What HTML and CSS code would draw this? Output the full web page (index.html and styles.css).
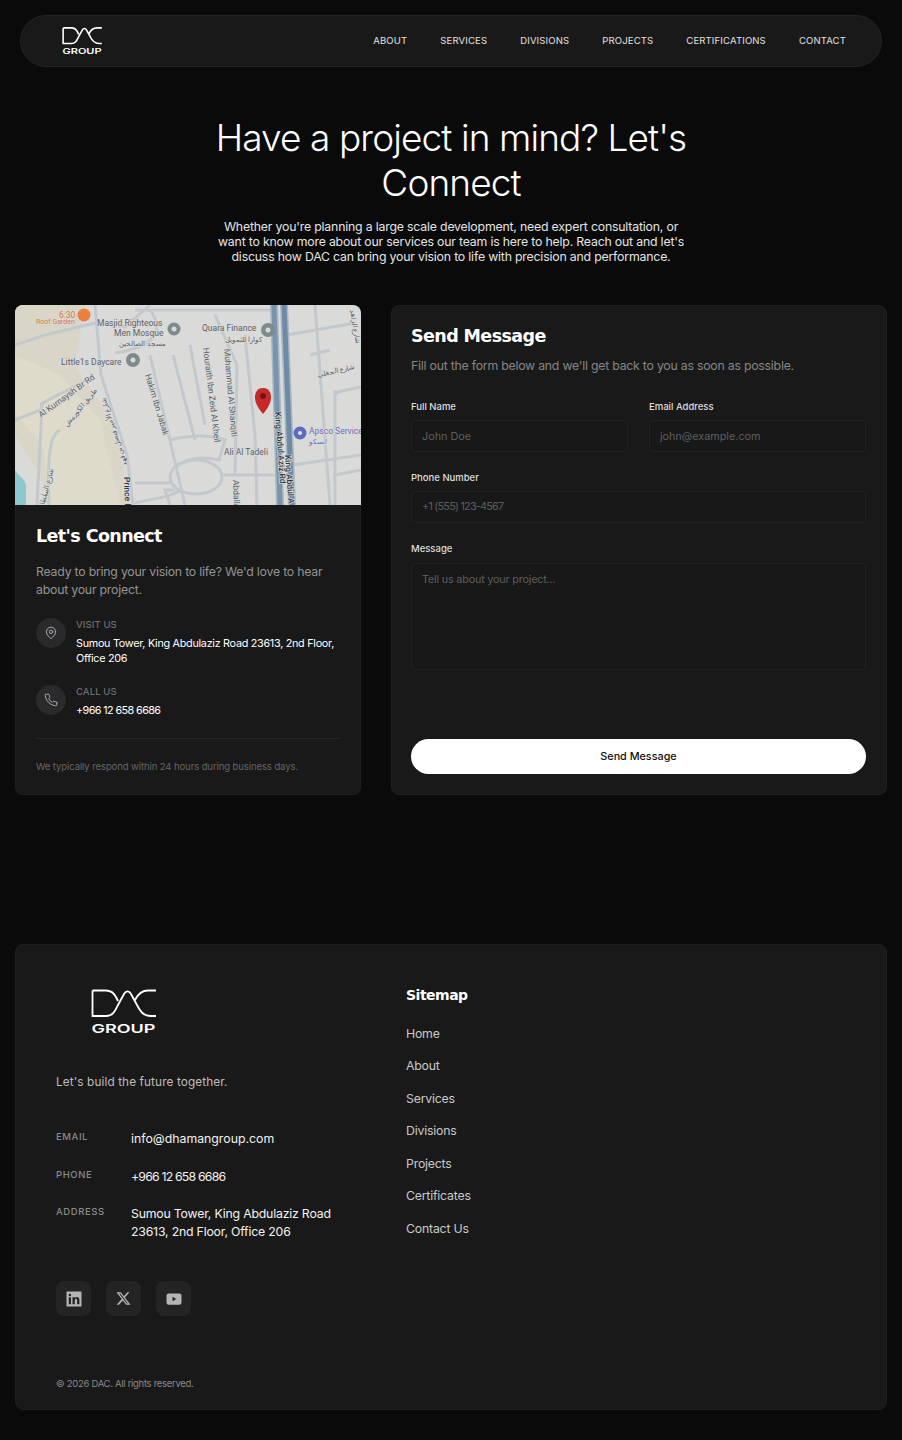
FILE: index.html
```html
<!DOCTYPE html>
<html lang="en">
<head>
<meta charset="utf-8">
<title>DAC Group - Contact</title>
<link rel="stylesheet" href="styles.css">
</head>
<body>
<header class="nav">
  <a class="nav-logo" href="#">
    <svg class="logo-svg" width="40" height="28" viewBox="0 0 65 46" fill="none"><path d="M1.500 1.500V27H15C22 27 24 22 27 16L33 5C35 1.500 38 1.500 40 5L46 16C49 22 52 27 60 27H65M1.500 1.500H15C20 1.500 23 4 25 8L27 12M65 1.500H57C52 1.500 47 5 44 11" stroke="#fff" stroke-width="2.600"/><text class="logo-text" x="32.500" y="44" text-anchor="middle" textLength="64" lengthAdjust="spacingAndGlyphs">GROUP</text></svg>
  </a>
  <nav class="nav-links">
    <a href="#">ABOUT</a><a href="#">SERVICES</a><a href="#">DIVISIONS</a><a href="#">PROJECTS</a><a href="#">CERTIFICATIONS</a><a href="#">CONTACT</a>
  </nav>
</header>

<section class="hero">
  <h1>Have a project in mind? Let's<br>Connect</h1>
  <p>Whether you're planning a large scale development, need expert consultation, or<br>want to know more about our services our team is here to help. Reach out and let's<br>discuss how DAC can bring your vision to life with precision and performance.</p>
</section>

<main class="contact">
  <aside class="card info">
    <svg class="map" width="346" height="200" viewBox="0 0 346 200">
      <rect width="346" height="200" fill="#dadbd9"/>
      <path d="M0 0H70L60 60L100 120L115 200H32L25 170L0 130Z" fill="#d9d6c8"/>
      <path d="M0 50L45 70L85 115L105 200H35L28 140L0 110Z" fill="#dfdbca"/>
      <path d="M0 165C4 172 9 172 11 180L11 200H0Z" fill="#8fc7d0"/>
      <g fill="none" stroke="#c3c8cc" stroke-width="3">
        <path d="M80 0L86 70L112 150L118 200"/>
        <path d="M0 40L30 30L80 18L110 22L135 0"/>
        <path d="M135 5C150 25 140 42 100 48"/>
        <path d="M120 5H258"/>
        <path d="M135 50L170 200"/>
        <path d="M158 50L180 135"/>
        <path d="M175 40L190 120"/>
        <path d="M200 10L222 60L220 170"/>
        <path d="M230 30L240 130L242 200"/>
        <path d="M155 135C175 130 195 130 210 135L204 155C185 150 170 155 160 162"/>
        <ellipse cx="181" cy="172" rx="26" ry="17"/>
        <path d="M207 170H262"/>
        <path d="M120 178H155"/>
        <path d="M120 198C135 194 150 194 165 186"/>
        <path d="M25 100C40 90 55 85 70 76"/>
        <path d="M27 100L22 200"/>
        <path d="M45 125C35 130 32 150 34 200"/>
        <path d="M0 115L25 105"/>
        <path d="M160 185H150L155 200"/>
        <path d="M278 160L346 150"/>
        <path d="M300 0L315 200"/>
        <path d="M320 85V200"/>
        <path d="M320 90C322 85 335 85 346 82"/>
        <path d="M272 30L340 18"/>
        <path d="M320 170L346 165"/>
        <path d="M295 50L315 45"/>
      </g>
      <path d="M259 0L265 200" stroke="#a9b7c4" stroke-width="8"/>
      <path d="M259 0L265 200" stroke="#7a94ad" stroke-width="5"/>
      <path d="M269 0L277 200" stroke="#a9b7c4" stroke-width="8"/>
      <path d="M269 0L277 200" stroke="#6f8aa7" stroke-width="5"/>
      <path d="M248 80C240 80 240 88 240 90C240 97 248 106 248 106C248 106 256 97 256 90C256 88 256 80 248 80Z" transform="translate(0 3)" fill="#c52a28"/>
      <circle cx="248" cy="91" r="3" fill="#7a1413"/>
      <circle cx="69" cy="10" r="6.500" fill="#e8823b"/>
      <circle cx="159" cy="24" r="6.500" fill="#7d8a8e"/><circle cx="159" cy="24" r="2.500" fill="#d9dad8"/>
      <circle cx="253" cy="25" r="7" fill="#7d8a8e"/><circle cx="253" cy="25" r="2.500" fill="#d9dad8"/>
      <circle cx="118" cy="55" r="7" fill="#7d8a8e"/><circle cx="118" cy="55" r="2.500" fill="#d9dad8"/>
      <circle cx="285" cy="128" r="6.500" fill="#5c6bc0"/><circle cx="285" cy="128" r="2" fill="#e4e6f4"/>
      <g class="map-label">
        <text class="lbl-orange" x="44" y="13">6:30</text>
        <text class="lbl-orange small" x="21" y="19">Roof Garden</text>
        <text x="82" y="21">Masjid Righteous</text>
        <text x="99" y="31">Men Mosque</text>
        <text class="small" x="104" y="41">مسجد الصالحين</text>
        <text x="187" y="26">Quara Finance</text>
        <text class="small" x="210" y="37">كوارا للتمويل</text>
        <text x="46" y="60">Little1s Daycare</text>
        <text class="lbl-blue" x="294" y="129">Apsco Service</text>
        <text class="lbl-blue small" x="294" y="139">ابسكو</text>
        <text x="209" y="150">Ali Al Tadeli</text>
        <text transform="translate(26 113) rotate(-36)">Al Kurnaysh Br Rd</text>
        <text class="small" transform="translate(52 122) rotate(-50)">طريق الكورنيش</text>
        <text transform="translate(130 70) rotate(73)">Hakim Ibn Jabak</text>
        <text transform="translate(188 43) rotate(83)">Houraith Ibn Zeid Al Kheil</text>
        <text transform="translate(209 44) rotate(85)">Muhammad Al Shanqiti</text>
        <text class="road" transform="translate(260 107) rotate(86)">King Abdul Aziz Rd</text>
        <text class="road" transform="translate(270 150) rotate(86)">King Abdul A</text>
        <text class="road" transform="translate(109 172) rotate(88)">Prince F</text>
        <text transform="translate(218 175) rotate(88)">Abdalla</text>
        <text class="small" transform="translate(112 160) rotate(-108)">شارع الأمير فيصل بن فهد</text>
        <text class="small" transform="translate(28 205) rotate(-75)">شارع السلطان</text>
        <text class="small" transform="translate(303 72) rotate(-12)">شارع الحفلي</text>
        <text class="small" transform="translate(335 5) rotate(80)">شارع الزاهد</text>
      </g>
    </svg>
    <div class="info-body">
      <h2>Let's Connect</h2>
      <p class="info-lead">Ready to bring your vision to life? We'd love to hear about your project.</p>
      <div class="info-item">
        <span class="round-icon"><svg width="14" height="14" viewBox="0 0 24 24" fill="none" stroke="#aaa" stroke-width="1.700" stroke-linecap="round" stroke-linejoin="round"><path d="M20 10c0 5-5.500 9.700-7.400 11.200a1 1 0 0 1-1.200 0C9.500 19.700 4 15 4 10a8 8 0 0 1 16 0"/><circle cx="12" cy="10" r="3"/></svg></span>
        <div class="item-text"><span class="item-label">VISIT US</span><span class="item-value">Sumou Tower, King Abdulaziz Road 23613, 2nd Floor, Office 206</span></div>
      </div>
      <div class="info-item">
        <span class="round-icon"><svg width="14" height="14" viewBox="0 0 24 24" fill="none" stroke="#aaa" stroke-width="1.700" stroke-linecap="round" stroke-linejoin="round"><path d="M22 16.900v3a2 2 0 0 1-2.200 2 19.800 19.800 0 0 1-8.600-3.100 19.500 19.500 0 0 1-6-6A19.800 19.800 0 0 1 2.100 4.200 2 2 0 0 1 4.100 2h3a2 2 0 0 1 2 1.700c.1 1 .4 1.900.7 2.800a2 2 0 0 1-.5 2.100L8.100 9.900a16 16 0 0 0 6 6l1.300-1.300a2 2 0 0 1 2.100-.4c.9.300 1.800.6 2.800.7a2 2 0 0 1 1.700 2z"/></svg></span>
        <div class="item-text"><span class="item-label">CALL US</span><span class="item-value item-phone">+966 12 658 6686</span></div>
      </div>
      <p class="info-note">We typically respond within 24 hours during business days.</p>
    </div>
  </aside>

  <form class="card form">
    <h2>Send Message</h2>
    <p class="form-lead">Fill out the form below and we'll get back to you as soon as possible.</p>
    <div class="form-row">
      <label class="field"><span>Full Name</span><input type="text" placeholder="John Doe"></label>
      <label class="field"><span>Email Address</span><input type="email" placeholder="john@example.com"></label>
    </div>
    <label class="field"><span>Phone Number</span><input class="input-phone" type="tel" placeholder="+1 (555) 123-4567"></label>
    <label class="field field-message"><span>Message</span><textarea placeholder="Tell us about your project..."></textarea></label>
    <button type="button" class="send">Send Message</button>
  </form>
</main>

<footer class="card footer">
  <div class="foot-left">
    <svg class="foot-logo" width="65" height="46" viewBox="0 0 65 46" fill="none"><path d="M1.500 1.500V27H15C22 27 24 22 27 16L33 5C35 1.500 38 1.500 40 5L46 16C49 22 52 27 60 27H65M1.500 1.500H15C20 1.500 23 4 25 8L27 12M65 1.500H57C52 1.500 47 5 44 11" stroke="#fff" stroke-width="1.800"/><text class="logo-text" x="32.500" y="44" text-anchor="middle" textLength="64" lengthAdjust="spacingAndGlyphs">GROUP</text></svg>
    <p class="tagline">Let's build the future together.</p>
    <dl class="contact-list">
      <div class="contact-row"><dt>EMAIL</dt><dd class="foot-email">info@dhamangroup.com</dd></div>
      <div class="contact-row"><dt>PHONE</dt><dd class="foot-phone">+966 12 658 6686</dd></div>
      <div class="contact-row"><dt>ADDRESS</dt><dd>Sumou Tower, King Abdulaziz Road 23613, 2nd Floor, Office 206</dd></div>
    </dl>
    <div class="socials">
      <a href="#" class="social"><svg width="18" height="18" viewBox="0 0 24 24" fill="#b5b5b5"><path d="M2 2H22V22H2ZM5 9.500V19H8V9.500ZM6.500 5A1.700 1.700 0 1 0 6.500 8.400 1.700 1.700 0 0 0 6.500 5ZM10 9.500V19H13V14C13 11 16.200 11 16.200 14V19H19.200V13.500C19.200 8.500 14.400 8.500 13 10.800V9.500Z" fill-rule="evenodd"/></svg></a>
      <a href="#" class="social"><svg width="15" height="15" viewBox="0 0 24 24" fill="#b5b5b5"><path d="M18.200 2h3.400l-7.400 8.500L23 22h-6.800l-5.400-7-6.100 7H1.200l7.900-9.100L.8 2h7l4.800 6.400zm-1.200 18h1.900L7 3.900H5z"/></svg></a>
      <a href="#" class="social"><svg width="18" height="18" viewBox="0 0 24 24" fill="#b5b5b5"><path fill-rule="evenodd" d="M5 4.500H19A3 3 0 0 1 22 7.500V16.500A3 3 0 0 1 19 19.500H5A3 3 0 0 1 2 16.500V7.500A3 3 0 0 1 5 4.500ZM10 9V15L15 12Z"/></svg></a>
    </div>
    <p class="copyright">© 2026 DAC. All rights reserved.</p>
  </div>
  <nav class="sitemap">
    <h3>Sitemap</h3>
    <a href="#">Home</a><a href="#">About</a><a href="#">Services</a><a href="#">Divisions</a><a href="#">Projects</a><a href="#">Certificates</a><a href="#">Contact Us</a>
  </nav>
</footer>
</body>
</html>
```
FILE: styles.css
```css
* { box-sizing: border-box; }
html, body { margin: 0; padding: 0; }
body {
  background: #0a0a0a;
  color: #fff;
  font-family: "Inter", "Noto Sans", sans-serif;
  width: 902px;
  height: 1440px;
  overflow: hidden;
}
a { color: inherit; text-decoration: none; }
p, h1, h2, h3, dl, dd { margin: 0; }

.nav {
  margin: 15px 20px 0;
  height: 52px;
  border-radius: 26px;
  background: #191919;
  border: 1px solid #232323;
  display: flex;
  align-items: center;
  justify-content: space-between;
  padding: 0 35px 0 41px;
}
.nav-logo { display: flex; }
.logo-text { font-family: "Inter", sans-serif; font-weight: 600; font-size: 12px; fill: #fff; }
.nav-links { display: flex; gap: 33px; padding-bottom: 2px; font-size: 9.500px; letter-spacing: .16px; color: #e2e2e2; font-weight: 400; }

.hero { text-align: center; margin-top: 48px; }
.hero h1 {
  font-family: "Inter", sans-serif;
  font-weight: 300;
  font-size: 37px;
  line-height: 45px;
  letter-spacing: -.9px;
  color: #fff;
}
.hero p { margin-top: 14px; font-size: 12.300px; line-height: 15px; letter-spacing: -.19px; color: #e4e4e4; white-space: nowrap; }

.contact { display: flex; gap: 30px; margin: 41px 15px 0; height: 490px; }
.card { background: #191919; border-radius: 8px; border: 1px solid #1f1f1f; }
.info { width: 346px; flex: none; overflow: hidden; display: flex; flex-direction: column; border: 0; box-shadow: inset 0 0 0 1px #1f1f1f; }
.map { display: block; flex: none; }
.map-label text { font-family: "Roboto", "Noto Sans", sans-serif; font-size: 8.500px; fill: #5a6269; stroke: #dadbd9; stroke-width: 1.500px; paint-order: stroke; }
.map-label .small { font-size: 7px; }
.map-label .lbl-orange { fill: #d9792e; }
.map-label .lbl-blue { fill: #6a70bf; }
.map-label .road { fill: #2e3a46; font-weight: 500; }

.info-body { padding: 20px 21px 0; flex: 1; display: flex; flex-direction: column; }
h2 {
  font-family: "DejaVu Sans", sans-serif;
  font-weight: 700;
  font-size: 17.500px;
  letter-spacing: -.6px;
  line-height: 22px;
}
.info-lead { margin-top: 16px; font-size: 12.300px; line-height: 18px; letter-spacing: -.22px; color: #949494; }
.info-item { display: flex; gap: 10px; margin-top: 19px; }
.round-icon { width: 30px; height: 30px; flex: none; border-radius: 50%; background: #2a2a2c; display: flex; align-items: center; justify-content: center; }
.item-text { display: flex; flex-direction: column; flex: 1; }
.item-label { font-size: 9.500px; line-height: 14px; letter-spacing: .1px; color: #6e6e6e; font-weight: 500; }
.item-value { margin-top: 4px; font-size: 10.800px; line-height: 15px; letter-spacing: -.28px; color: #fff; font-weight: 400; }
.item-phone { letter-spacing: -.6px; }
.info-note { margin-top: 20px; padding-top: 21px; border-top: 1px solid #262626; font-size: 9.500px; line-height: 14px; letter-spacing: -.09px; color: #666; }

.form { flex: 1; padding: 19px 20px 20px 19px; display: flex; flex-direction: column; }
.form-lead { margin-top: 10px; font-size: 12.300px; line-height: 18px; letter-spacing: -.23px; color: #868686; }
.form-row { display: flex; gap: 21px; margin-top: 25px; }
.form-row .field { flex: 1; margin-top: 0; }
.field { display: flex; flex-direction: column; margin-top: 18.500px; }
.field span { font-size: 9.500px; line-height: 14px; color: #dedede; font-weight: 500; margin-bottom: 6px; }
.field-message { margin-top: 19px; }
.field-message span { margin-bottom: 7px; }
.field input, .field textarea {
  background: #181818;
  border: 1px solid #222;
  border-radius: 4px;
  color: #fff;
  font: inherit;
  font-size: 10.800px;
  padding: 0 10px;
  height: 32px;
  outline: none;
  width: 100%;
  display: block;
}
.field textarea { height: 107px; padding: 9px 10px; resize: none; letter-spacing: -.18px; }
.field .input-phone { letter-spacing: -.75px; }
.field input::placeholder, .field textarea::placeholder { color: #5e5e5e; opacity: 1; }
.send {
  margin-top: auto;
  height: 35px;
  border: 0;
  border-radius: 18px;
  background: #fff;
  color: #111;
  font: inherit;
  font-size: 10.800px;
  font-weight: 500;
  flex: none;
}

.footer { margin: 149px 15px 0; height: 466px; display: flex; padding: 0 0 0 40px; }
.foot-left { width: 350px; flex: none; display: flex; flex-direction: column; }
.foot-logo { display: block; margin: 44px 0 0 35px; }
.tagline { margin-top: 38px; font-size: 11.800px; line-height: 18px; letter-spacing: .1px; color: #bdbdbd; }
.contact-list { margin-top: 39px; display: flex; flex-direction: column; gap: 19.500px; }
.contact-row { display: flex; }
.contact-row dt { width: 75px; flex: none; font-size: 9.500px; line-height: 14px; letter-spacing: .6px; color: #8a8a8a; font-weight: 500; }
.contact-row dd { font-size: 12.300px; line-height: 18px; letter-spacing: -.2px; color: #f2f2f2; width: 215px; }
.contact-row .foot-email { letter-spacing: 0; }
.contact-row .foot-phone { letter-spacing: -.8px; }
.socials { display: flex; gap: 15px; margin-top: 40px; }
.social { width: 35px; height: 35px; border-radius: 8px; background: #242424; display: flex; align-items: center; justify-content: center; }
.copyright { margin-top: 61px; font-size: 9.500px; line-height: 14px; letter-spacing: -.3px; color: #8a8a8a; }

.sitemap { display: flex; flex-direction: column; padding-top: 40px; align-items: flex-start; }
.sitemap h3 {
  font-family: "DejaVu Sans", sans-serif;
  font-size: 14px;
  font-weight: 700;
  letter-spacing: -.5px;
  line-height: 20px;
  margin-bottom: 19.500px;
}
.sitemap a { font-size: 12.300px; line-height: 18px; letter-spacing: -.2px; margin-top: 14.600px; color: #c9c9c9; }
.sitemap a:first-of-type { margin-top: 0; }
```
